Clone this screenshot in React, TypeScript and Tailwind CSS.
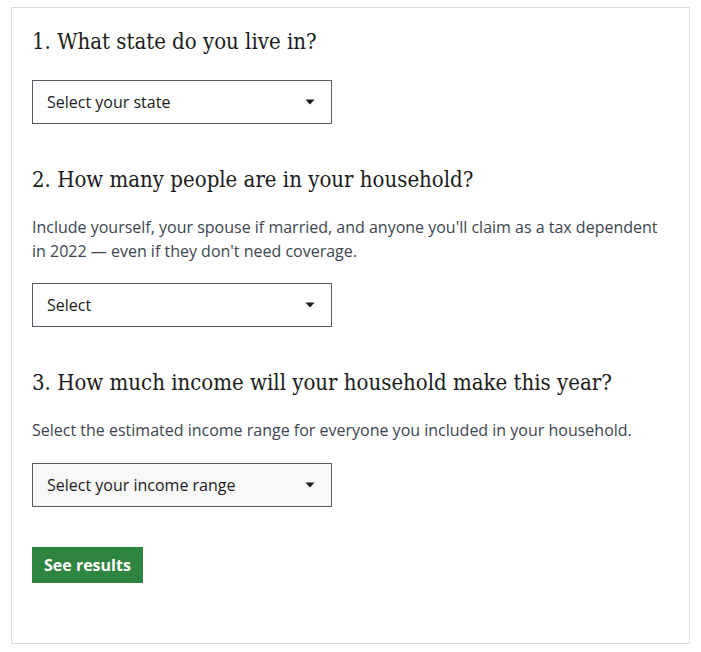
import React from "react";

function Caret() {
  return (
    <svg width="10" height="6" viewBox="0 0 10 6" className="shrink-0">
      <path d="M0.5 0.5 L9.5 0.5 L5 5.5 Z" fill="#1b1b1b" />
    </svg>
  );
}

function SelectBox({ label, bg }: { label: string; bg: string }) {
  return (
    <div
      className={`w-[300px] h-[44px] border border-[#565c65] ${bg} flex items-center justify-between pl-[14px] pr-[16px] text-[16px] text-[#1b1b1b]`}
    >
      <span>{label}</span>
      <Caret />
    </div>
  );
}

const heading =
  "font-['DejaVu_Serif_Condensed','DejaVu_Serif',serif] text-[22px] leading-[28px] text-[#1b1b1b]";

export default function App() {
  return (
    <div className="w-[701px] h-[652px] bg-white pt-[7px] pl-[11px] font-['Open_Sans',sans-serif]">
      <div className="w-[679px] h-[637px] border border-[#dcdcdc] px-[20px] pt-[20px]">
        <h2 className={heading}>1. What state do you live in?</h2>
        <div className="mt-[24px]">
          <SelectBox label="Select your state" bg="bg-white" />
        </div>
        <h2 className={`mt-[42px] ${heading}`}>2. How many people are in your household?</h2>
        <p className="mt-[21px] text-[16px] leading-[24px] text-[#3d4551]">
          Include yourself, your spouse if married, and anyone you'll claim as a tax dependent in 2022 — even if they don't need coverage.
        </p>
        <div className="mt-[20px]">
          <SelectBox label="Select" bg="bg-white" />
        </div>
        <h2 className={`mt-[42px] ${heading}`}>3. How much income will your household make this year?</h2>
        <p className="mt-[21px] text-[16px] leading-[24px] text-[#3d4551]">
          Select the estimated income range for everyone you included in your household.
        </p>
        <div className="mt-[21px]">
          <SelectBox label="Select your income range" bg="bg-[#f8f8f8]" />
        </div>
        <button className="mt-[40px] h-[36px] px-[12px] bg-[#2e8540] text-white font-bold text-[16px] leading-none">
          See results
        </button>
      </div>
    </div>
  );
}
